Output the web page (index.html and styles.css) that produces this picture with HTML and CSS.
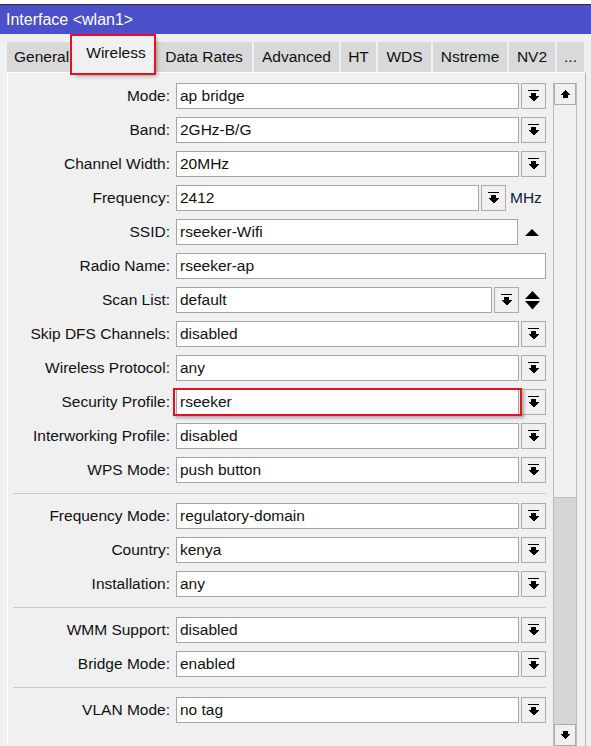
FILE: index.html
```html
<!DOCTYPE html>
<html>
<head>
<meta charset="utf-8">
<link rel="stylesheet" href="styles.css">
</head>
<body>
<div class="topstrip"></div>
<div class="titlebar">Interface &lt;wlan1&gt;</div>
<div class="tabs">
  <div class="tab w-general">General</div>
  <div class="tab active w-wireless">Wireless</div>
  <div class="tab w-rates">Data Rates</div>
  <div class="tab w-adv">Advanced</div>
  <div class="tab w-ht">HT</div>
  <div class="tab w-wds">WDS</div>
  <div class="tab w-nstreme">Nstreme</div>
  <div class="tab w-nv2">NV2</div>
  <div class="tab w-more">...</div>
</div>
<div class="panel">
  <div class="form">
    <div class="row"><div class="lbl">Mode:</div><div class="ctl"><div class="field">ap bridge</div><div class="dd"><svg class="ddi" viewBox="0 0 11 12"><rect x="0" y="0" width="11" height="1"/><rect x="3" y="3" width="5" height="3"/><polygon points="0,6 11,6 5.5,11.5"/></svg></div></div></div>
    <div class="row"><div class="lbl">Band:</div><div class="ctl"><div class="field">2GHz-B/G</div><div class="dd"><svg class="ddi" viewBox="0 0 11 12"><rect x="0" y="0" width="11" height="1"/><rect x="3" y="3" width="5" height="3"/><polygon points="0,6 11,6 5.5,11.5"/></svg></div></div></div>
    <div class="row"><div class="lbl">Channel Width:</div><div class="ctl"><div class="field">20MHz</div><div class="dd"><svg class="ddi" viewBox="0 0 11 12"><rect x="0" y="0" width="11" height="1"/><rect x="3" y="3" width="5" height="3"/><polygon points="0,6 11,6 5.5,11.5"/></svg></div></div></div>
    <div class="row"><div class="lbl">Frequency:</div><div class="ctl"><div class="field">2412</div><div class="dd"><svg class="ddi" viewBox="0 0 11 12"><rect x="0" y="0" width="11" height="1"/><rect x="3" y="3" width="5" height="3"/><polygon points="0,6 11,6 5.5,11.5"/></svg></div><div class="unit">MHz</div></div></div>
    <div class="row"><div class="lbl">SSID:</div><div class="ctl"><div class="field">rseeker-Wifi</div><div class="side wide"><svg class="tri" viewBox="0 0 14 7"><polygon points="0,7 7,0 14,7"/></svg></div></div></div>
    <div class="row"><div class="lbl">Radio Name:</div><div class="ctl"><div class="field">rseeker-ap</div></div></div>
    <div class="row"><div class="lbl">Scan List:</div><div class="ctl"><div class="field">default</div><div class="dd"><svg class="ddi" viewBox="0 0 11 12"><rect x="0" y="0" width="11" height="1"/><rect x="3" y="3" width="5" height="3"/><polygon points="0,6 11,6 5.5,11.5"/></svg></div><div class="side"><svg class="updown" viewBox="0 0 15 19"><polygon points="0,8 7.5,0 15,8"/><polygon points="0,10 15,10 7.5,18.5"/></svg></div></div></div>
    <div class="row"><div class="lbl">Skip DFS Channels:</div><div class="ctl"><div class="field">disabled</div><div class="dd"><svg class="ddi" viewBox="0 0 11 12"><rect x="0" y="0" width="11" height="1"/><rect x="3" y="3" width="5" height="3"/><polygon points="0,6 11,6 5.5,11.5"/></svg></div></div></div>
    <div class="row"><div class="lbl">Wireless Protocol:</div><div class="ctl"><div class="field">any</div><div class="dd"><svg class="ddi" viewBox="0 0 11 12"><rect x="0" y="0" width="11" height="1"/><rect x="3" y="3" width="5" height="3"/><polygon points="0,6 11,6 5.5,11.5"/></svg></div></div></div>
    <div class="row"><div class="lbl">Security Profile:</div><div class="ctl"><div class="field hl">rseeker</div><div class="dd"><svg class="ddi" viewBox="0 0 11 12"><rect x="0" y="0" width="11" height="1"/><rect x="3" y="3" width="5" height="3"/><polygon points="0,6 11,6 5.5,11.5"/></svg></div></div></div>
    <div class="row"><div class="lbl">Interworking Profile:</div><div class="ctl"><div class="field">disabled</div><div class="dd"><svg class="ddi" viewBox="0 0 11 12"><rect x="0" y="0" width="11" height="1"/><rect x="3" y="3" width="5" height="3"/><polygon points="0,6 11,6 5.5,11.5"/></svg></div></div></div>
    <div class="row"><div class="lbl">WPS Mode:</div><div class="ctl"><div class="field">push button</div><div class="dd"><svg class="ddi" viewBox="0 0 11 12"><rect x="0" y="0" width="11" height="1"/><rect x="3" y="3" width="5" height="3"/><polygon points="0,6 11,6 5.5,11.5"/></svg></div></div></div>
    <div class="sep"></div>
    <div class="row"><div class="lbl">Frequency Mode:</div><div class="ctl"><div class="field">regulatory-domain</div><div class="dd"><svg class="ddi" viewBox="0 0 11 12"><rect x="0" y="0" width="11" height="1"/><rect x="3" y="3" width="5" height="3"/><polygon points="0,6 11,6 5.5,11.5"/></svg></div></div></div>
    <div class="row"><div class="lbl">Country:</div><div class="ctl"><div class="field">kenya</div><div class="dd"><svg class="ddi" viewBox="0 0 11 12"><rect x="0" y="0" width="11" height="1"/><rect x="3" y="3" width="5" height="3"/><polygon points="0,6 11,6 5.5,11.5"/></svg></div></div></div>
    <div class="row"><div class="lbl">Installation:</div><div class="ctl"><div class="field">any</div><div class="dd"><svg class="ddi" viewBox="0 0 11 12"><rect x="0" y="0" width="11" height="1"/><rect x="3" y="3" width="5" height="3"/><polygon points="0,6 11,6 5.5,11.5"/></svg></div></div></div>
    <div class="sep"></div>
    <div class="row"><div class="lbl">WMM Support:</div><div class="ctl"><div class="field">disabled</div><div class="dd"><svg class="ddi" viewBox="0 0 11 12"><rect x="0" y="0" width="11" height="1"/><rect x="3" y="3" width="5" height="3"/><polygon points="0,6 11,6 5.5,11.5"/></svg></div></div></div>
    <div class="row"><div class="lbl">Bridge Mode:</div><div class="ctl"><div class="field">enabled</div><div class="dd"><svg class="ddi" viewBox="0 0 11 12"><rect x="0" y="0" width="11" height="1"/><rect x="3" y="3" width="5" height="3"/><polygon points="0,6 11,6 5.5,11.5"/></svg></div></div></div>
    <div class="sep"></div>
    <div class="row"><div class="lbl">VLAN Mode:</div><div class="ctl"><div class="field">no tag</div><div class="dd"><svg class="ddi" viewBox="0 0 11 12"><rect x="0" y="0" width="11" height="1"/><rect x="3" y="3" width="5" height="3"/><polygon points="0,6 11,6 5.5,11.5"/></svg></div></div></div>
  </div>
  <div class="scroll">
    <div class="sb-btn"><svg class="sba" viewBox="0 0 11 8"><polygon points="0,5 5.5,0 11,5"/><rect x="3" y="5" width="5" height="3"/></svg></div>
    <div class="sb-track"></div>
    <div class="sb-thumb"></div>
    <div class="sb-btn"><svg class="sba" viewBox="0 0 11 8"><rect x="3" y="0" width="5" height="3"/><polygon points="0,3 11,3 5.5,8"/></svg></div>
  </div>
</div>
</body>
</html>
```

FILE: styles.css
```css
* { box-sizing: border-box; }
html, body { margin: 0; padding: 0; }
body {
  width: 591px;
  height: 746px;
  overflow: hidden;
  background: #f0f0f0;
  font-family: "Liberation Sans", Arial, sans-serif;
  font-size: 15.5px;
  color: #111;
}
.topstrip {
  height: 5px;
  background: #fff;
  border-bottom: 1px solid #2a2a2a;
}
.titlebar {
  height: 29px;
  line-height: 29px;
  background: #4c4fca;
  color: #fff;
  padding-left: 6px;
  font-size: 16px;
}
.tabs {
  display: flex;
  align-items: flex-end;
  height: 38px;
  padding-left: 7px;
  gap: 2px;
}
.tab {
  height: 30px;
  background: #d9d9d9;
  display: flex;
  align-items: center;
  justify-content: center;
  white-space: nowrap;
  overflow: hidden;
}
.w-general { width: 63px; justify-content: flex-start; padding-left: 7px; }
.tab.active {
  height: 37px;
  margin-bottom: -1px;
  background: #f0f0f0;
  position: relative;
  z-index: 2;
  outline: 2px solid #e3141b;
  box-shadow: 3px 3px 4px rgba(0,0,0,0.35);
  padding: 0 0 4px 6px;
  overflow: visible;
}
.w-wireless { width: 82px; }
.w-rates { width: 96px; }
.w-adv { width: 85px; }
.w-ht { width: 35px; }
.w-wds { width: 53px; }
.w-nstreme { width: 74px; }
.w-nv2 { width: 46px; }
.w-more { width: 27px; }

.panel {
  margin-left: 7px;
  width: 579px;
  height: 674px;
  border-top: 1px solid #fff;
  border-left: 1px solid #fff;
  border-right: 1px solid #b4b4b4;
  padding-top: 10px;
  display: flex;
  align-items: flex-start;
}
.form {
  width: 545px;
  flex: none;
  display: flex;
  flex-direction: column;
}
.row {
  display: flex;
  align-items: center;
  height: 26px;
  margin-bottom: 8px;
}
.lbl {
  width: 162px;
  text-align: right;
  white-space: nowrap;
}
.ctl {
  margin-left: 6px;
  width: 370px;
  height: 26px;
  display: flex;
}
.field {
  flex: 1;
  border: 1px solid #a5a5a5;
  background: #fff;
  padding-left: 3px;
  line-height: 24px;
  white-space: nowrap;
}
.field.hl { position: relative; }
.field.hl::after {
  content: "";
  position: absolute;
  left: -4px;
  right: -4px;
  top: -2px;
  bottom: -2px;
  border: 2px solid #e3141b;
  box-shadow: 2px 2px 3px rgba(0,0,0,0.3);
}
.dd {
  width: 25px;
  margin-left: 2px;
  flex: none;
  border: 1px solid #adadad;
  background: #f0f0f0;
  display: flex;
  align-items: center;
  justify-content: center;
  padding-bottom: 1px;
}
.ddi { width: 11px; height: 12px; fill: #000; shape-rendering: crispEdges; }
.unit {
  width: 40px;
  flex: none;
  padding-left: 4px;
  line-height: 26px;
  color: #0d1a3a;
}
.side {
  width: 27px;
  flex: none;
  display: flex;
  align-items: center;
  justify-content: center;
}
.side.wide { width: 28px; }
.tri { width: 14px; height: 7px; fill: #000; }
.updown { width: 15px; height: 19px; fill: #000; }
.sep {
  height: 1px;
  flex: none;
  background: #c8c8c8;
  margin: 2px 0 9px 5px;
  width: 533px;
}
.scroll {
  width: 24px;
  height: 663px;
  flex: none;
  border-left: 1px solid #bcbcbc;
  border-right: 1px solid #bcbcbc;
  display: flex;
  flex-direction: column;
}
.sb-btn {
  height: 22px;
  flex: none;
  border: 1px solid #adadad;
  background: #f0f0f0;
  display: flex;
  align-items: center;
  justify-content: center;
}
.sba { width: 11px; height: 8px; fill: #000; shape-rendering: crispEdges; }
.sb-track { height: 392px; flex: none; background: #f0f0f0; }
.sb-thumb {
  flex: 1;
  background: #d6d6d6;
  border-top: 1px solid #c0c0c0;
}
```
